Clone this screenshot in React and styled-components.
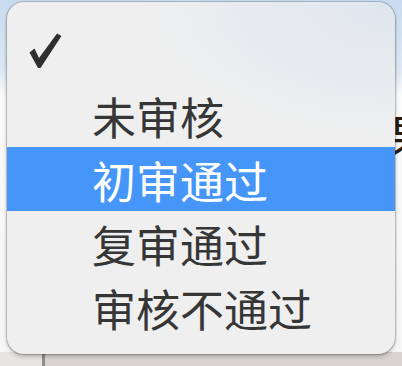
import React from "react";
import styled, { createGlobalStyle } from "styled-components";

const Global = createGlobalStyle`
  html, body { margin: 0; padding: 0; }
  body { width: 402px; height: 366px; overflow: hidden; background: #f4f4f4; }
`;

const Desktop = styled.div`
  position: relative;
  width: 402px;
  height: 366px;
  display: flex;
  flex-direction: column;
  overflow: hidden;
  font-family: "Noto Sans CJK SC", "Noto Sans", sans-serif;
`;

const Content = styled.div`
  flex: 1;
  display: flex;
  flex-direction: column;
  align-items: flex-end;
  background: linear-gradient(180deg, #c9dbf0 0px, #dde8f4 70px, #fafafa 95px, #f6f6f6 100%);
`;

const BehindGlyph = styled.span`
  margin-top: 110px;
  margin-right: -32px;
  font-size: 46px;
  line-height: 1;
  color: #2a1a0c;
`;

const Strip = styled.div`
  height: 14px;
  display: flex;
`;

const StripCell = styled.div`
  width: ${(p) => p.$w || "auto"};
  flex: ${(p) => (p.$grow ? 1 : "none")};
  background: ${(p) => p.$bg};
`;

const Menu = styled.div`
  position: absolute;
  left: 7px;
  top: 2px;
  width: 388px;
  height: 352px;
  box-sizing: border-box;
  padding: 17px 0 15px;
  border-radius: 17px;
  background:
    radial-gradient(ellipse 260px 140px at 100% 0%, rgba(218, 228, 238, 0.8), rgba(218, 228, 238, 0) 100%),
    #efefef;
  box-shadow: 0 0 0 1px rgba(0, 0, 0, 0.16), 0 2px 4px rgba(0, 0, 0, 0.28);
  display: flex;
  flex-direction: column;
`;

const Row = styled.div`
  height: 64px;
  display: flex;
  align-items: center;
  padding-left: ${(p) => (p.$check ? "22px" : "85px")};
  background: ${(p) => (p.$active ? "#4596f8" : "transparent")};
  color: ${(p) => (p.$active ? "#ffffff" : "#363636")};
  font-size: 44px;
  line-height: 1;
  white-space: nowrap;
`;

const Label = styled.span`
  display: block;
  transform: translateY(1px);
`;

const Check = () => (
  <svg width="33" height="36" viewBox="0 0 33 36" aria-hidden="true">
    <path d="M0.5 19.5 L5.5 15.5 L10 25 L28 0.5 L32.5 3 L11.5 35 L9 35 Z" fill="#2f2f2f" />
  </svg>
);

const items = ["未审核", "初审通过", "复审通过", "审核不通过"];

export default function App() {
  return (
    <>
      <Global />
      <Desktop>
        <Content>
          <BehindGlyph>果</BehindGlyph>
        </Content>
        <Strip>
          <StripCell $w="42px" $bg="#e6e4e2" />
          <StripCell $w="3px" $bg="#8d8c8b" />
          <StripCell $grow $bg="#d6d3d0" />
        </Strip>
        <Menu>
          <Row $check>
            <Check />
          </Row>
          {items.map((t) => (
            <Row key={t} $active={t === "初审通过"}>
              <Label>{t}</Label>
            </Row>
          ))}
        </Menu>
      </Desktop>
    </>
  );
}
